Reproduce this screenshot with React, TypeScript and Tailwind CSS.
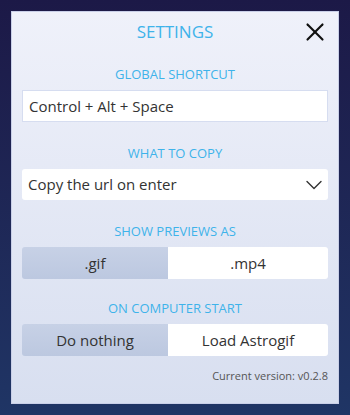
import { X } from 'lucide-react';

type ToggleProps = {
  left: string;
  right: string;
};

const Toggle = ({ left, right }: ToggleProps) => (
  <div className="flex h-[32px] w-full overflow-hidden rounded-[3px] text-[15px] text-[#333]">
    <div className="flex w-[146px] items-center justify-center bg-gradient-to-b from-[#c7d1e6] to-[#bcc8e0]">
      {left}
    </div>
    <div className="flex flex-1 items-center justify-center bg-white">{right}</div>
  </div>
);

const Label = ({ children }: { children: string }) => (
  <div className="text-center text-[13px] leading-[13px] text-[#3eb3ea]">{children}</div>
);

export default function App() {
  return (
    <div
      className="flex h-[415px] w-[350px] bg-gradient-to-b from-[#1c1947] to-[#1f3565] p-[11px]"
      style={{ fontFamily: '"Open Sans", "Noto Sans", sans-serif' }}
    >
      <div className="flex h-[393px] w-[328px] flex-col border border-[#c9cfe8] bg-gradient-to-b from-[#eff1fa] to-[#d8dff0] px-[10px] pt-[11px]">
        <div className="relative flex justify-center">
          <span className="text-[17px] leading-[17px] text-[#3eb3ea]">SETTINGS</span>
          <X className="absolute right-[-2px] top-[-6px] h-[30px] w-[30px] text-[#111]" strokeWidth={1.7} />
        </div>

        <div className="mt-[28px]">
          <Label>GLOBAL SHORTCUT</Label>
        </div>
        <div className="mt-[9px] flex h-[32px] items-center border border-[#d6ddf0] bg-white px-[6px] text-[15px] text-[#333]">
          Control + Alt + Space
        </div>

        <div className="mt-[25px]">
          <Label>WHAT TO COPY</Label>
        </div>
        <div className="mt-[9px] flex h-[31px] items-center justify-between rounded-[3px] bg-white pl-[6px] pr-[6px] text-[15px] text-[#333]">
          <span>Copy the url on enter</span>
          <svg width="16" height="10" viewBox="0 0 16 10" fill="none" stroke="#333" strokeWidth="1.4" strokeLinecap="round" strokeLinejoin="round">
            <polyline points="1,1.5 8,8.5 15,1.5" />
          </svg>
        </div>

        <div className="mt-[25px]">
          <Label>SHOW PREVIEWS AS</Label>
        </div>
        <div className="mt-[9px]">
          <Toggle left=".gif" right=".mp4" />
        </div>

        <div className="mt-[23px]">
          <Label>ON COMPUTER START</Label>
        </div>
        <div className="mt-[9px]">
          <Toggle left="Do nothing" right="Load Astrogif" />
        </div>

        <div className="mt-[12px] text-right text-[11px] leading-[15px] text-[#555]">Current version: v0.2.8</div>
      </div>
    </div>
  );
}
